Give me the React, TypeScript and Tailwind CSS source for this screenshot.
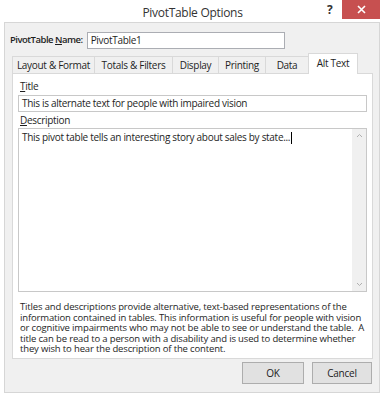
import type { ReactNode } from 'react'

const tabs = ['Layout & Format', 'Totals & Filters', 'Display', 'Printing', 'Data']
const tabWidths = ['w-[82px]', 'w-[78px]', 'w-[46px]', 'w-[47px]', 'w-[43px]']

function Btn({ children }: { children: ReactNode }) {
  return (
    <div className="flex h-[22px] items-center justify-center border border-[#adadad] bg-[#e1e1e1] text-[10px] tracking-[-0.2px] text-[#222]">
      {children}
    </div>
  )
}

export default function App() {
  return (
    <div
      className="relative h-[400px] w-[385px] overflow-hidden bg-white text-[#1e1e1e]"
      style={{ fontFamily: '"Open Sans", "Noto Sans", sans-serif' }}
    >
      {/* title bar */}
      <div className="relative flex h-[22px] items-center justify-center">
        <span className="whitespace-nowrap pt-[3px] text-[12px] tracking-[-0.3px] text-[#333]">PivotTable Options</span>
        <span className="absolute left-[327px] top-[1px] text-[12px] font-bold text-[#333]">?</span>
        <div className="absolute left-[342px] top-0 flex h-[19px] w-[38px] items-center justify-center bg-[#c75050]">
          <svg width="9" height="9" viewBox="0 0 9 9">
            <path d="M1 1 L8 8 M8 1 L1 8" stroke="white" strokeWidth="1.6" />
          </svg>
        </div>
      </div>

      {/* body */}
      <div className="ml-[4px] flex h-[371px] w-[376px] flex-col border border-[#d6d6d6] bg-[#f0f0f0]">
        <div className="mt-[9px] flex items-center pl-[5px]">
          <span className="mr-[4px] shrink-0 whitespace-nowrap text-[9.5px] font-semibold tracking-[-0.5px]">
            PivotTable <span className="underline">N</span>ame:
          </span>
          <div className="flex h-[17px] w-[198px] items-center border border-[#abadb3] bg-white pl-[3px] text-[10px] tracking-[-0.3px]">
            PivotTable1
          </div>
        </div>

        {/* tabs */}
        <div className="mt-[4px] flex items-end pl-[7px]">
          {tabs.map((t, i) => (
            <div
              key={t}
              className={`flex h-[17px] items-center justify-center whitespace-nowrap border border-b-0 border-r-0 border-[#d9d9d9] bg-[#f0f0f0] text-[10px] tracking-[-0.3px] ${tabWidths[i]}`}
            >
              {t}
            </div>
          ))}
          <div className="relative z-10 -mb-px flex h-[21px] w-[50px] items-center justify-center whitespace-nowrap border border-b-0 border-[#d9d9d9] bg-white pb-[2px] text-[10px] tracking-[-0.3px]">
            Alt Text
          </div>
        </div>

        {/* panel */}
        <div className="ml-[7px] flex h-[286px] w-[361px] flex-col border border-[#d9d9d9] bg-white px-[5px] text-[10px] tracking-[-0.3px]">
          <div className="mt-[5px] pl-[2px] leading-[14px]">
            <span className="underline">T</span>itle
          </div>
          <div className="mt-[2px] flex h-[17px] w-[349px] items-center whitespace-nowrap border border-[#c8c8c8] pl-[3px]">
            This is alternate text for people with impaired vision
          </div>
          <div className="mt-[1px] pl-[2px] leading-[14px]">
            <span className="underline">D</span>escription
          </div>
          <div className="mt-px flex h-[164px] w-[349px] border border-[#c8c8c8]">
            <div className="flex-1 whitespace-nowrap pl-[3px] pt-[1px] leading-[14px]">
              This pivot table tells an interesting story about sales by state...
              <span className="ml-px inline-block h-[12px] w-px bg-black align-middle" />
            </div>
            <div className="flex w-[14px] flex-col items-center justify-between bg-[#f0f0f0] py-[4px]">
              <svg width="7" height="5" viewBox="0 0 7 5">
                <path d="M1 4 L3.5 1.5 L6 4" stroke="#b0b0b0" fill="none" strokeWidth="1" />
              </svg>
              <svg width="7" height="5" viewBox="0 0 7 5">
                <path d="M1 1 L3.5 3.5 L6 1" stroke="#b0b0b0" fill="none" strokeWidth="1" />
              </svg>
            </div>
          </div>
          <p className="mt-[10px] whitespace-nowrap pl-[2px] text-[9.5px] leading-[10.5px] tracking-[-0.15px]">
            Titles and descriptions provide alternative, text-based representations of the
            <br />
            information contained in tables. This information is useful for people with vision
            <br />
            or cognitive impairments who may not be able to see or understand the table.&nbsp; A
            <br />
            title can be read to a person with a disability and is used to determine whether
            <br />
            they wish to hear the description of the content.
          </p>
        </div>

        {/* buttons */}
        <div className="mt-[3px] flex justify-end gap-[8px] pr-[7px]">
          <div className="w-[62px]">
            <Btn>OK</Btn>
          </div>
          <div className="w-[60px]">
            <Btn>Cancel</Btn>
          </div>
        </div>
      </div>
    </div>
  )
}
